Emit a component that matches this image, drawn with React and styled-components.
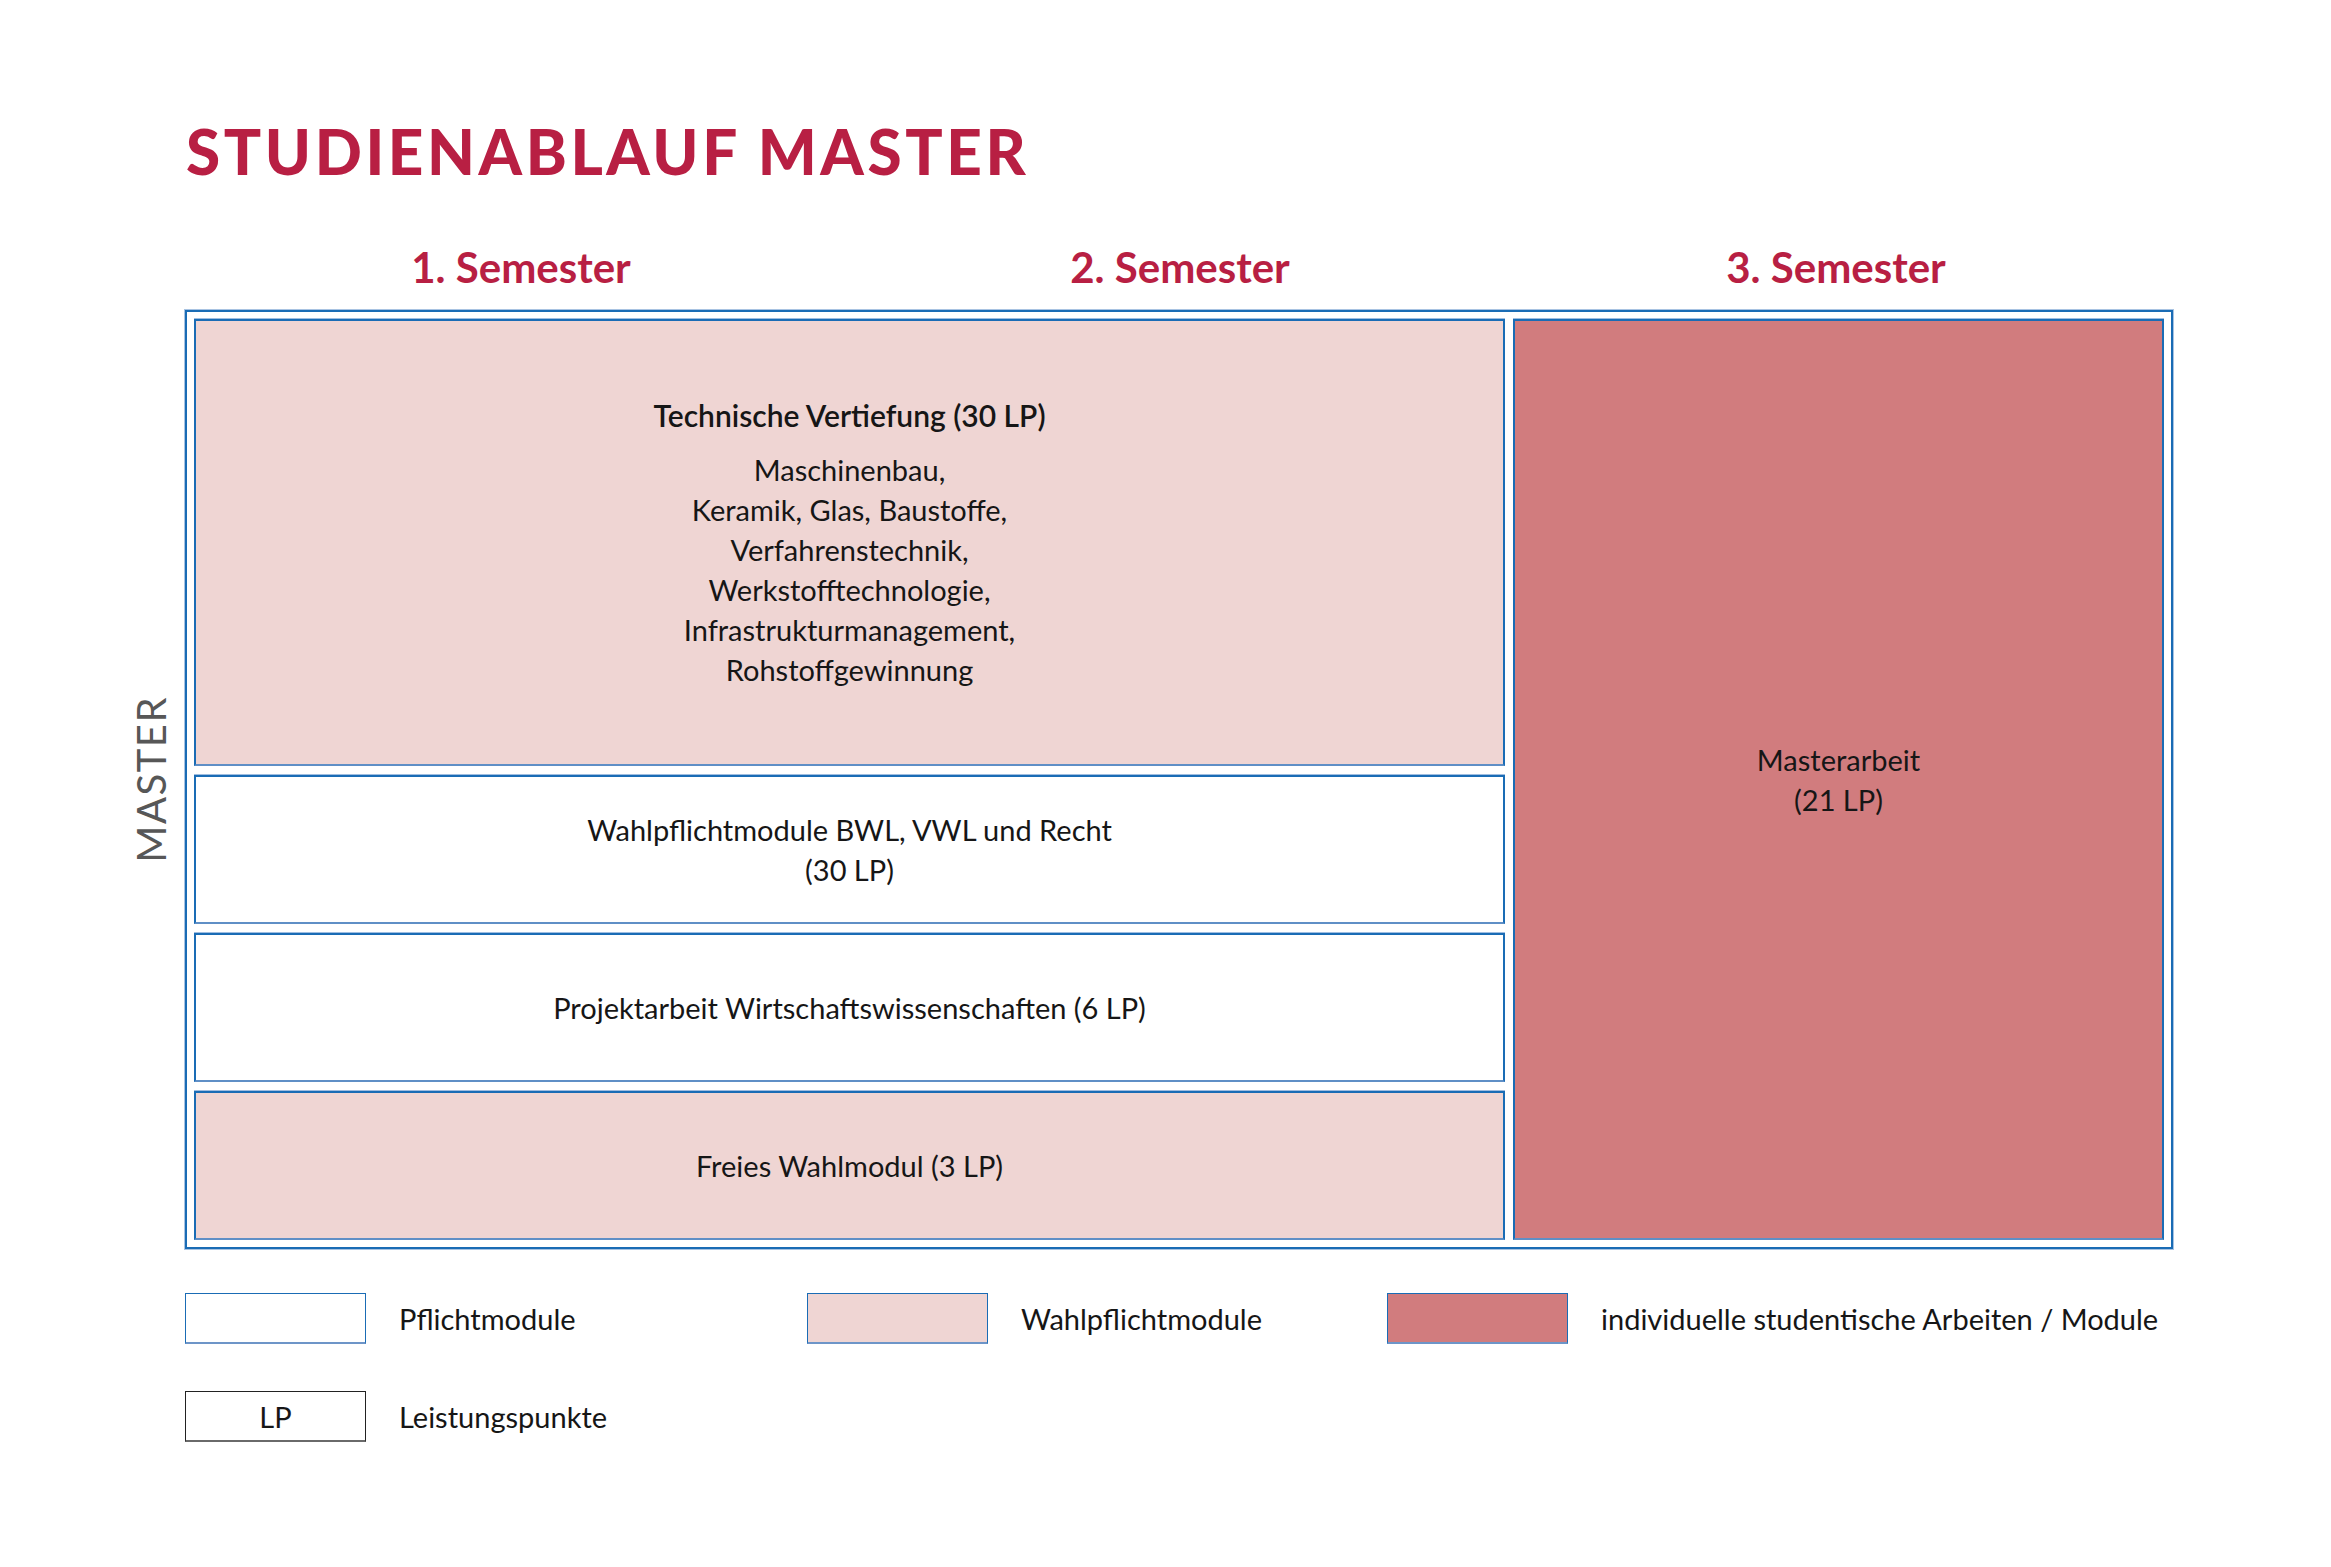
import React from "react";
import styled, { createGlobalStyle } from "styled-components";

const GlobalStyle = createGlobalStyle`
  html, body {
    margin: 0;
    padding: 0;
    background: #ffffff;
  }
  body {
    font-family: Lato, "Liberation Sans", sans-serif;
    color: #161616;
  }
`;

const BLUE = "#1a6cb5";
const CRIMSON = "#b81f43";
const PALE = "#efd5d3";
const ROSE = "#d17c7e";

const Page = styled.div`
  width: 2331px;
  min-height: 1567px;
  box-sizing: border-box;
  padding: 120px 0 0 120px;
`;

const Title = styled.h1`
  margin: 0 0 0 66px;
  font-family: Lato, "Liberation Sans", sans-serif;
  font-weight: 900;
  font-size: 62px;
  line-height: 62px;
  letter-spacing: 3.6px;
  color: ${CRIMSON};
`;

const Layout = styled.div`
  margin-top: 64px;
  display: grid;
  grid-template-columns: 65px 1988px;
  grid-template-areas:
    ". heads"
    "side plan"
    ". legend";
`;

const Heads = styled.div`
  grid-area: heads;
  display: grid;
  grid-template-columns: 646px 672px 640px;
  padding-left: 13px;
  margin-bottom: 22px;
`;

const SemesterHead = styled.div`
  text-align: center;
  font-weight: 700;
  font-size: 42px;
  line-height: 42px;
  color: ${CRIMSON};
`;

const SideLabel = styled.div`
  grid-area: side;
  display: flex;
  align-items: center;
  justify-content: center;
  padding-right: 4px;
  span {
    writing-mode: vertical-rl;
    transform: rotate(180deg);
    font-weight: 400;
    font-size: 40px;
    line-height: 40px;
    letter-spacing: 1.5px;
    color: #575757;
  }
`;

const Plan = styled.div`
  grid-area: plan;
  border: 2px solid ${BLUE};
  box-shadow: 0 0 0 1px #a8c3e2;
  padding: 7px;
  display: grid;
  grid-template-columns: 1311px 651px;
  column-gap: 8px;
`;

const Stack = styled.div`
  display: grid;
  grid-template-rows: 447px 149px 149px 149px;
  row-gap: 9px;
`;

const Module = styled.div`
  box-sizing: border-box;
  border: 2px solid ${BLUE};
  border-bottom-color: #5f8fc6;
  box-shadow: 0 -1px 0 #9fbde0;
  background: ${(p) => p.$fill};
  display: flex;
  flex-direction: column;
  align-items: center;
  justify-content: center;
  text-align: center;
  font-size: 29px;
  line-height: 40px;
  color: #161616;
`;

const ModuleHead = styled.div`
  font-weight: 600;
  font-size: 30px;
  margin-bottom: 15px;
`;

const Legend = styled.div`
  grid-area: legend;
  margin-top: 44px;
  display: grid;
  grid-template-columns: 622px 580px auto;
  row-gap: 47px;
`;

const LegendItem = styled.div`
  display: flex;
  align-items: center;
  gap: 33px;
  font-size: 29px;
  color: #161616;
`;

const Swatch = styled.div`
  width: 181px;
  height: 51px;
  box-sizing: border-box;
  border: ${(p) => (p.$plain ? "1px solid #222" : `1px solid ${BLUE}`)};
  border-bottom: ${(p) => (p.$plain ? "2px solid #6a6a6a" : "2px solid #6d95c8")};
  background: ${(p) => p.$fill || "#ffffff"};
  display: flex;
  align-items: center;
  justify-content: center;
  font-size: 29px;
`;

export default function App() {
  return (
    <>
      <GlobalStyle />
      <Page>
        <Title>STUDIENABLAUF MASTER</Title>
        <Layout>
          <Heads>
            <SemesterHead>1. Semester</SemesterHead>
            <SemesterHead>2. Semester</SemesterHead>
            <SemesterHead>3. Semester</SemesterHead>
          </Heads>

          <SideLabel>
            <span>MASTER</span>
          </SideLabel>

          <Plan>
            <Stack>
              <Module $fill={PALE}>
                <ModuleHead>Technische Vertiefung (30 LP)</ModuleHead>
                <div>Maschinenbau,</div>
                <div>Keramik, Glas, Baustoffe,</div>
                <div>Verfahrenstechnik,</div>
                <div>Werkstofftechnologie,</div>
                <div>Infrastrukturmanagement,</div>
                <div>Rohstoffgewinnung</div>
              </Module>
              <Module $fill="#ffffff">
                <div>Wahlpflichtmodule BWL, VWL und Recht</div>
                <div>(30 LP)</div>
              </Module>
              <Module $fill="#ffffff">
                <div>Projektarbeit Wirtschaftswissenschaften (6 LP)</div>
              </Module>
              <Module $fill={PALE}>
                <div>Freies Wahlmodul (3 LP)</div>
              </Module>
            </Stack>
            <Module $fill={ROSE}>
              <div>Masterarbeit</div>
              <div>(21 LP)</div>
            </Module>
          </Plan>

          <Legend>
            <LegendItem>
              <Swatch />
              Pflichtmodule
            </LegendItem>
            <LegendItem>
              <Swatch $fill={PALE} />
              Wahlpflichtmodule
            </LegendItem>
            <LegendItem>
              <Swatch $fill={ROSE} />
              individuelle studentische Arbeiten / Module
            </LegendItem>
            <LegendItem>
              <Swatch $plain>LP</Swatch>
              Leistungspunkte
            </LegendItem>
          </Legend>
        </Layout>
      </Page>
    </>
  );
}
